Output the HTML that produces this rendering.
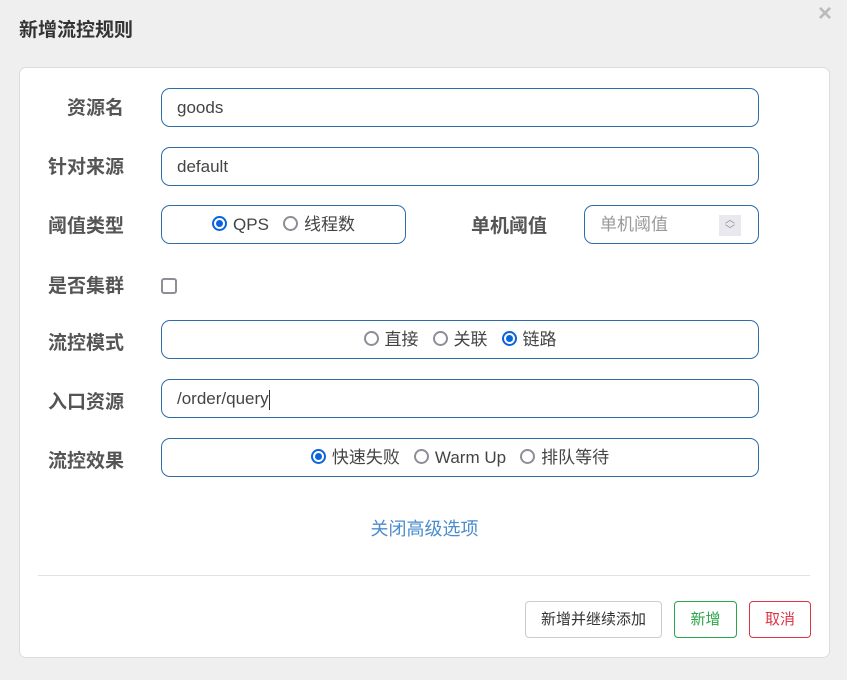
<!DOCTYPE html>
<html><head><meta charset="utf-8"><style>
*{box-sizing:border-box;margin:0;padding:0}
body{width:847px;height:680px;background:#efefef;font-family:"Liberation Sans","Noto Sans CJK SC",sans-serif;position:relative;overflow:hidden;color:#333}
.abs{position:absolute}
.title{left:19px;top:15px;font-size:19px;font-weight:bold;color:#333}
.close{left:818px;top:0px;font-size:24px;color:#bbb;font-weight:bold}
.card{left:19px;top:67px;width:811px;height:591px;background:#fff;border:1px solid #ddd;border-radius:7px}
.lbl{font-size:19px;font-weight:bold;color:#555;text-align:right;width:110px;left:14px;line-height:38px;margin-top:2px}
.inp{border:1px solid #2e6da8;border-radius:9px;height:39px;font-size:17px;line-height:37px;padding-left:15px;color:#444;background:#fff}
.rg{display:flex;justify-content:center;align-items:center}
.r{display:inline-block;width:15px;height:15px;border-radius:50%;border:2px solid #8e8d98;margin:0 6px 0 0;vertical-align:middle;position:relative;top:-1px}
.r.on{border-color:#0c64dc}
.r.on:after{content:"";position:absolute;left:2px;top:2px;width:7px;height:7px;border-radius:50%;background:#0c64dc}
.it{margin-right:14px;display:flex;align-items:center}
.btn{height:37px;border-radius:4px;font-size:15px;line-height:35px;text-align:center;background:#fff}
</style></head><body>
<div class="abs title">新增流控规则</div>
<div class="abs close">×</div>
<div class="abs card"></div>

<div class="abs lbl" style="top:88px">资源名</div>
<div class="abs inp" style="left:161px;top:88px;width:598px">goods</div>

<div class="abs lbl" style="top:147px">针对来源</div>
<div class="abs inp" style="left:161px;top:147px;width:598px">default</div>

<div class="abs lbl" style="top:206px">阈值类型</div>
<div class="abs inp rg" style="left:161px;top:205px;width:245px;padding-left:0"><span class="it"><span class="r on"></span>QPS</span><span class="it" style="margin-right:0"><span class="r"></span>线程数</span></div>
<div class="abs lbl" style="top:206px;left:437px">单机阈值</div>
<div class="abs inp" style="left:584px;top:205px;width:175px;color:#999">单机阈值
<span class="abs" style="left:134px;top:9px;width:22px;height:21px;background:#e8e8ee;font-size:10px;line-height:10px;text-align:center;color:#888;padding-top:1px">︿<br>﹀</span></div>

<div class="abs lbl" style="top:266px">是否集群</div>
<div class="abs" style="left:161px;top:278px;width:16px;height:16px;border:2px solid #8e8d98;border-radius:3px"></div>

<div class="abs lbl" style="top:323px">流控模式</div>
<div class="abs inp rg" style="left:161px;top:320px;width:598px;padding-left:0"><span class="it"><span class="r"></span>直接</span><span class="it"><span class="r"></span>关联</span><span class="it" style="margin-right:0"><span class="r on"></span>链路</span></div>

<div class="abs lbl" style="top:382px">入口资源</div>
<div class="abs inp" style="left:161px;top:379px;width:598px">/order/query<span style="border-left:1px solid #333;height:20px;display:inline-block;vertical-align:middle"></span></div>

<div class="abs lbl" style="top:441px">流控效果</div>
<div class="abs inp rg" style="left:161px;top:438px;width:598px;padding-left:0"><span class="it"><span class="r on"></span>快速失败</span><span class="it"><span class="r"></span>Warm Up</span><span class="it" style="margin-right:0"><span class="r"></span>排队等待</span></div>

<div class="abs" style="left:0;width:847px;text-align:center;top:515px;font-size:18px;color:#4a8ccc;padding-left:2px">关闭高级选项</div>
<div class="abs" style="left:38px;top:575px;width:772px;height:1px;background:#e2e2e2"></div>

<div class="abs btn" style="left:525px;top:601px;width:137px;border:1px solid #ccc;color:#333">新增并继续添加</div>
<div class="abs btn" style="left:674px;top:601px;width:63px;border:1px solid #2aa54a;color:#2aa54a">新增</div>
<div class="abs btn" style="left:749px;top:601px;width:62px;border:1px solid #dc3545;color:#dc3545">取消</div>
</body></html>
